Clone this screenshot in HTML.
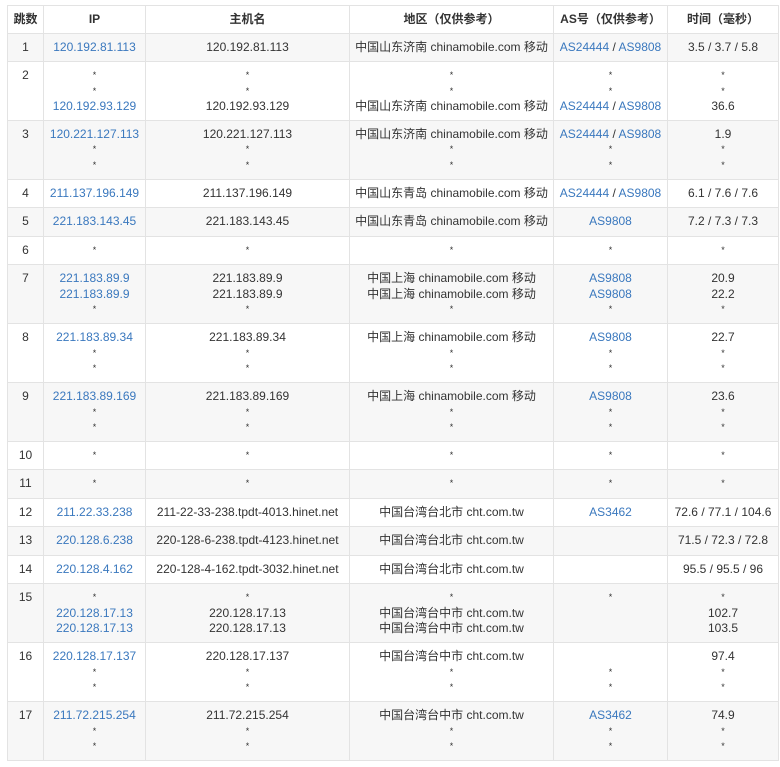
<!DOCTYPE html>
<html><head><meta charset="utf-8"><style>
body{margin:0;background:#fff;font-family:"Liberation Sans","Noto Sans CJK SC",sans-serif;font-size:12px;color:#333}
table{position:absolute;left:7px;top:5px;border-collapse:collapse;table-layout:fixed;width:771px}
td,th{border:1px solid #e3e3e3;text-align:center;vertical-align:top;padding:6px 2px 6px;line-height:15.5px;white-space:nowrap;overflow:hidden}
tr.t td{padding-bottom:5.4px}
th{font-weight:bold;color:#333;padding:6px 2px 5px}
tbody tr:nth-child(odd){background:#f7f7f7}
.l{color:#3a78be}
.s{font-size:9px;line-height:15px;vertical-align:top;display:inline-block;height:15px}
</style></head><body>
<table>
<colgroup><col style="width:36px"><col style="width:102px"><col style="width:204px"><col style="width:204px"><col style="width:114px"><col style="width:111px"></colgroup>
<thead><tr><th>跳数</th><th>IP</th><th>主机名</th><th>地区（仅供参考）</th><th>AS号（仅供参考）</th><th>时间（毫秒）</th></tr></thead>
<tbody>
<tr><td>1</td><td class="l">120.192.81.113</td><td>120.192.81.113</td><td>中国山东济南 chinamobile.com 移动</td><td><span class="l">AS24444</span> / <span class="l">AS9808</span></td><td>3.5 / 3.7 / 5.8</td></tr>
<tr class="t"><td>2</td><td><span class="s">*</span><br><span class="s">*</span><br><span class="l">120.192.93.129</span></td><td><span class="s">*</span><br><span class="s">*</span><br>120.192.93.129</td><td><span class="s">*</span><br><span class="s">*</span><br>中国山东济南 chinamobile.com 移动</td><td><span class="s">*</span><br><span class="s">*</span><br><span class="l">AS24444</span> / <span class="l">AS9808</span></td><td><span class="s">*</span><br><span class="s">*</span><br>36.6</td></tr>
<tr class="t"><td>3</td><td><span class="l">120.221.127.113</span><br><span class="s">*</span><br><span class="s">*</span></td><td>120.221.127.113<br><span class="s">*</span><br><span class="s">*</span></td><td>中国山东济南 chinamobile.com 移动<br><span class="s">*</span><br><span class="s">*</span></td><td><span class="l">AS24444</span> / <span class="l">AS9808</span><br><span class="s">*</span><br><span class="s">*</span></td><td>1.9<br><span class="s">*</span><br><span class="s">*</span></td></tr>
<tr><td>4</td><td class="l">211.137.196.149</td><td>211.137.196.149</td><td>中国山东青岛 chinamobile.com 移动</td><td><span class="l">AS24444</span> / <span class="l">AS9808</span></td><td>6.1 / 7.6 / 7.6</td></tr>
<tr><td>5</td><td class="l">221.183.143.45</td><td>221.183.143.45</td><td>中国山东青岛 chinamobile.com 移动</td><td class="l">AS9808</td><td>7.2 / 7.3 / 7.3</td></tr>
<tr><td>6</td><td><span class="s">*</span></td><td><span class="s">*</span></td><td><span class="s">*</span></td><td><span class="s">*</span></td><td><span class="s">*</span></td></tr>
<tr class="t"><td>7</td><td class="l">221.183.89.9<br>221.183.89.9<br><span class="s" style="color:#333">*</span></td><td>221.183.89.9<br>221.183.89.9<br><span class="s">*</span></td><td>中国上海 chinamobile.com 移动<br>中国上海 chinamobile.com 移动<br><span class="s">*</span></td><td class="l">AS9808<br>AS9808<br><span class="s" style="color:#333">*</span></td><td>20.9<br>22.2<br><span class="s">*</span></td></tr>
<tr class="t"><td>8</td><td><span class="l">221.183.89.34</span><br><span class="s">*</span><br><span class="s">*</span></td><td>221.183.89.34<br><span class="s">*</span><br><span class="s">*</span></td><td>中国上海 chinamobile.com 移动<br><span class="s">*</span><br><span class="s">*</span></td><td><span class="l">AS9808</span><br><span class="s">*</span><br><span class="s">*</span></td><td>22.7<br><span class="s">*</span><br><span class="s">*</span></td></tr>
<tr class="t"><td>9</td><td><span class="l">221.183.89.169</span><br><span class="s">*</span><br><span class="s">*</span></td><td>221.183.89.169<br><span class="s">*</span><br><span class="s">*</span></td><td>中国上海 chinamobile.com 移动<br><span class="s">*</span><br><span class="s">*</span></td><td><span class="l">AS9808</span><br><span class="s">*</span><br><span class="s">*</span></td><td>23.6<br><span class="s">*</span><br><span class="s">*</span></td></tr>
<tr><td>10</td><td><span class="s">*</span></td><td><span class="s">*</span></td><td><span class="s">*</span></td><td><span class="s">*</span></td><td><span class="s">*</span></td></tr>
<tr><td>11</td><td><span class="s">*</span></td><td><span class="s">*</span></td><td><span class="s">*</span></td><td><span class="s">*</span></td><td><span class="s">*</span></td></tr>
<tr><td>12</td><td class="l">211.22.33.238</td><td>211-22-33-238.tpdt-4013.hinet.net</td><td>中国台湾台北市 cht.com.tw</td><td class="l">AS3462</td><td>72.6 / 77.1 / 104.6</td></tr>
<tr><td>13</td><td class="l">220.128.6.238</td><td>220-128-6-238.tpdt-4123.hinet.net</td><td>中国台湾台北市 cht.com.tw</td><td></td><td>71.5 / 72.3 / 72.8</td></tr>
<tr><td>14</td><td class="l">220.128.4.162</td><td>220-128-4-162.tpdt-3032.hinet.net</td><td>中国台湾台北市 cht.com.tw</td><td></td><td>95.5 / 95.5 / 96</td></tr>
<tr class="t"><td>15</td><td><span class="s">*</span><br><span class="l">220.128.17.13<br>220.128.17.13</span></td><td><span class="s">*</span><br>220.128.17.13<br>220.128.17.13</td><td><span class="s">*</span><br>中国台湾台中市 cht.com.tw<br>中国台湾台中市 cht.com.tw</td><td><span class="s">*</span></td><td><span class="s">*</span><br>102.7<br>103.5</td></tr>
<tr class="t"><td>16</td><td><span class="l">220.128.17.137</span><br><span class="s">*</span><br><span class="s">*</span></td><td>220.128.17.137<br><span class="s">*</span><br><span class="s">*</span></td><td>中国台湾台中市 cht.com.tw<br><span class="s">*</span><br><span class="s">*</span></td><td><br><span class="s">*</span><br><span class="s">*</span></td><td>97.4<br><span class="s">*</span><br><span class="s">*</span></td></tr>
<tr class="t"><td>17</td><td><span class="l">211.72.215.254</span><br><span class="s">*</span><br><span class="s">*</span></td><td>211.72.215.254<br><span class="s">*</span><br><span class="s">*</span></td><td>中国台湾台中市 cht.com.tw<br><span class="s">*</span><br><span class="s">*</span></td><td><span class="l">AS3462</span><br><span class="s">*</span><br><span class="s">*</span></td><td>74.9<br><span class="s">*</span><br><span class="s">*</span></td></tr>
</tbody></table>
</body></html>
